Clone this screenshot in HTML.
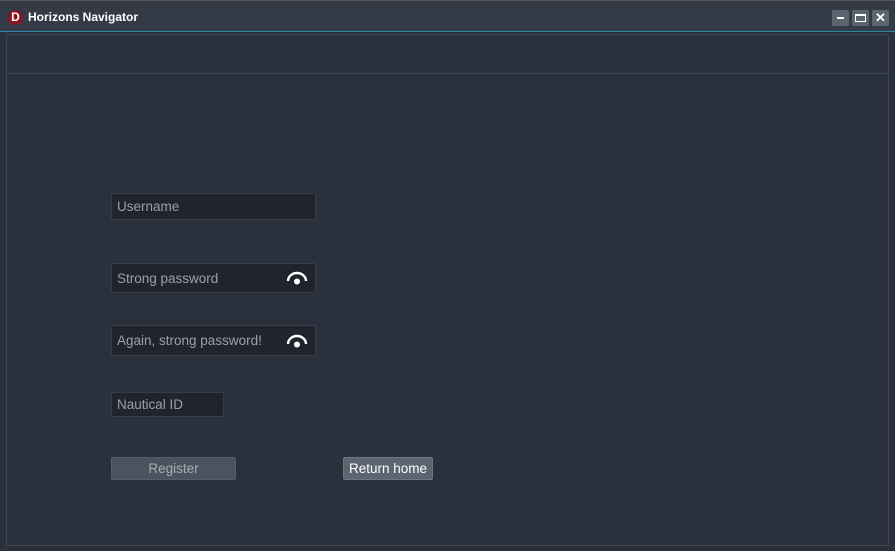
<!DOCTYPE html>
<html><head><style>
*{margin:0;padding:0;box-sizing:border-box}
body{width:895px;height:551px;background:#2b313c;font-family:"Liberation Sans",sans-serif;position:relative;overflow:hidden}
.title{position:absolute;left:0;top:0;width:895px;height:32px;background:#343b47;border-bottom:1px solid #2a8aa6;border-top:1px solid #555}
.logo{position:absolute;left:8px;top:9px;width:15px;height:15px;border-radius:50%;background:#8a1520;color:#fff;font-weight:bold;font-size:12px;line-height:15px;text-align:center}
.tt{position:absolute;left:28px;top:9px;color:#fff;font-weight:bold;font-size:12px}
.wb{position:absolute;top:9px;width:17px;height:16px;background:#5b6570;border-radius:2px;color:#fff}
.box{position:absolute;border:1px solid #3e4754;border-radius:2px}
.in{position:absolute;left:111px;background:#1f242d;border:1px solid #363e4a;border-radius:2px;color:#9aa1a9;font-size:13.5px;padding-left:5px;display:flex;align-items:center}
.eye{position:absolute;right:7px;top:50%;margin-top:-9px}
.btn{position:absolute;top:457px;height:23px;border-radius:2px;font-size:13.5px;text-align:center;line-height:22px}
</style></head><body>
<div class="title">
<div class="logo">D</div><div class="tt">Horizons Navigator</div>
<div class="wb" style="left:832px"><div style="position:absolute;left:5px;top:7px;width:7px;height:2px;background:#fff"></div></div>
<div class="wb" style="left:852px"><div style="position:absolute;left:3px;top:4px;width:11px;height:8px;border:2px solid #fff;border-width:2px 1.5px 1.5px"></div></div>
<div class="wb" style="left:872px;font-size:13px;font-weight:bold;text-align:center;line-height:16px">✕</div>
</div>
<div class="box" style="left:6px;top:34px;width:883px;height:40px"></div>
<div class="box" style="left:6px;top:73px;width:883px;height:473px"></div>
<div class="in" style="top:193px;width:205px;height:27px">Username</div>
<div class="in" style="top:263px;width:205px;height:30px">Strong password<svg class="eye" width="22" height="18" viewBox="0 0 22 18"><path d="M2 12 A9 8 0 0 1 20 12" fill="none" stroke="#fff" stroke-width="2.4"/><circle cx="11" cy="12.5" r="3" fill="#fff"/></svg></div>
<div class="in" style="top:325px;width:205px;height:31px">Again, strong password!<svg class="eye" width="22" height="18" viewBox="0 0 22 18"><path d="M2 12 A9 8 0 0 1 20 12" fill="none" stroke="#fff" stroke-width="2.4"/><circle cx="11" cy="12.5" r="3" fill="#fff"/></svg></div>
<div class="in" style="top:392px;width:113px;height:25px">Nautical ID</div>
<div class="btn" style="left:111px;width:125px;background:#4a535e;color:#a6adb4;border:1px solid #555e69">Register</div>
<div class="btn" style="left:343px;width:90px;background:#5b6570;color:#fff;border:1px solid #6d7782">Return home</div>
</body></html>
